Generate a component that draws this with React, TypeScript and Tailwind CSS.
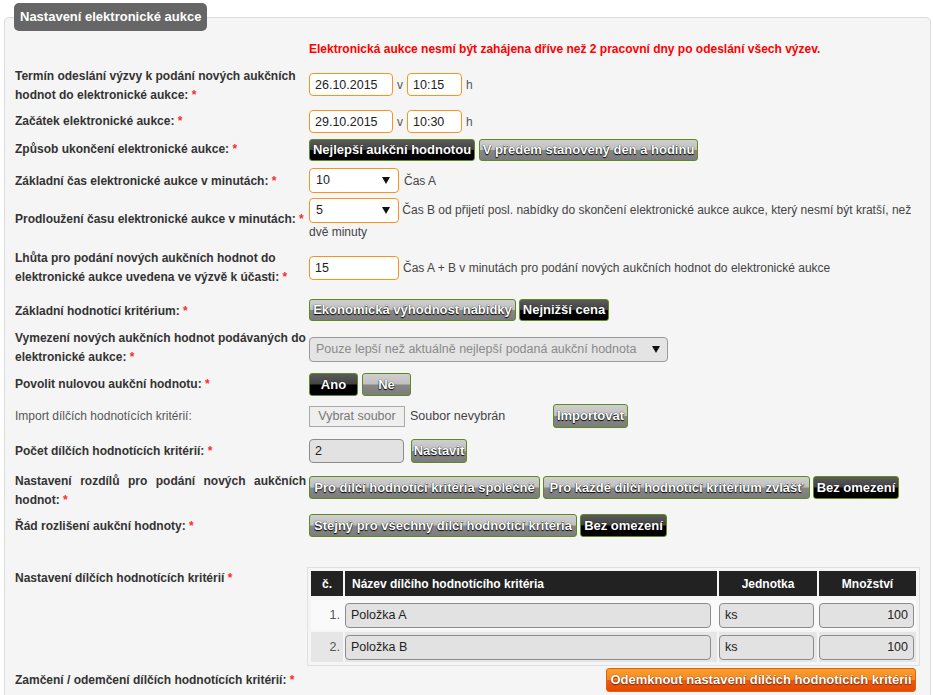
import React from "react";

const star = <span className="font-bold text-[#ff2b2b]"> *</span>;

function Label({ children, className = "" }: { children: React.ReactNode; className?: string }) {
  return (
    <div className={`mr-[3px] w-[291px] shrink-0 text-[12px] leading-[19px] text-[#333] ${className}`}>
      {children}
    </div>
  );
}

function Btn({ children, dark, className = "" }: { children: React.ReactNode; dark?: boolean; className?: string }) {
  return (
    <button
      type="button"
      className={`inline-flex shrink-0 items-center justify-center whitespace-nowrap rounded-[3px] border border-[#5e8a20] text-[13px] font-bold text-white [text-shadow:0_0_1px_#000,0_1px_1px_#000] ${
        dark
          ? "bg-[linear-gradient(#5a5a5a_0%,#444_48%,#000_52%,#000_100%)]"
          : "bg-[linear-gradient(#cfcfcf_0%,#c0c0c0_48%,#878787_52%,#7c7c7c_100%)]"
      } ${className}`}
    >
      {children}
    </button>
  );
}

function OrangeInput({ value, className = "" }: { value: string; className?: string }) {
  return (
    <input
      readOnly
      value={value}
      className={`rounded-[4px] border border-[#f7941d] bg-white px-[5px] text-[12.5px] text-[#222] outline-none ${className}`}
    />
  );
}

function GrayInput({ value, className = "" }: { value: string; className?: string }) {
  return (
    <input
      readOnly
      value={value}
      className={`rounded-[4px] border border-[#8c8c8c] bg-[#e2e2e2] px-[5px] text-[12.5px] text-[#222] outline-none ${className}`}
    />
  );
}

function Arrow() {
  return (
    <svg width="8" height="7" viewBox="0 0 8 7" className="shrink-0">
      <path d="M0 0h8L4 7z" fill="#111" />
    </svg>
  );
}

function Select({ value }: { value: string }) {
  return (
    <span className="inline-flex h-[25px] w-[90px] items-center justify-between rounded-[4px] border border-[#f7941d] bg-white pl-[6px] pr-[8px] align-middle text-[12.5px] text-[#222]">
      {value}
      <Arrow />
    </span>
  );
}

export default function App() {
  return (
    <div className="min-h-screen bg-white font-['Liberation_Sans',Arial,sans-serif] text-[12px] text-[#444]">
      <fieldset className="mx-[4px] mt-[3px] rounded-[5px] border border-[#dcdcdc] bg-[#f5f5f5] pb-[12px] pl-[10px] pr-[10px]">
        <legend className="-ml-px h-[28px] rounded-[5px] bg-[#666] px-[6px] text-[13px] font-bold leading-[28px] text-white">
          Nastavení elektronické aukce
        </legend>

        <div className="h-[35px] pl-[294px] pt-[9px] text-[12px] font-bold leading-[19px] text-[#ff0000]">
          Elektronická aukce nesmí být zahájena dříve než 2 pracovní dny po odeslání všech výzev.
        </div>

        {/* termín odeslání */}
        <div className="flex h-[44px]">
          <Label className="pt-px font-bold">
            Termín odeslání výzvy k podání nových aukčních hodnot do elektronické aukce:{star}
          </Label>
          <div className="flex items-center gap-[4px] self-start pt-[7px]">
            <OrangeInput value="26.10.2015" className="h-[23px] w-[84px]" />
            <span className="text-[#555]">v</span>
            <OrangeInput value="10:15" className="h-[23px] w-[55px]" />
            <span className="text-[#555]">h</span>
          </div>
        </div>

        <div className="flex h-[29px]">
          <Label className="pt-[2px] font-bold">Začátek elektronické aukce:{star}</Label>
          <div className="flex items-center gap-[4px] self-start">
            <OrangeInput value="29.10.2015" className="h-[23px] w-[84px]" />
            <span className="text-[#555]">v</span>
            <OrangeInput value="10:30" className="h-[23px] w-[55px]" />
            <span className="text-[#555]">h</span>
          </div>
        </div>

        <div className="flex h-[29px]">
          <Label className="pt-px font-bold">Způsob ukončení elektronické aukce:{star}</Label>
          <div className="flex items-start gap-[4px]">
            <Btn dark className="h-[22px] w-[166px]">Nejlepší aukční hodnotou</Btn>
            <Btn className="h-[22px] w-[219px]">V předem stanovený den a hodinu</Btn>
          </div>
        </div>

        <div className="flex h-[30px]">
          <Label className="pt-[4px] font-bold">Základní čas elektronické aukce v minutách:{star}</Label>
          <div className="flex items-center gap-[5px] self-start">
            <Select value="10" />
            <span>Čas A</span>
          </div>
        </div>

        <div className="flex h-[50px]">
          <Label className="pt-[12px] font-bold">Prodloužení času elektronické aukce v minutách:{star}</Label>
          <div className="leading-[19px]">
            <Select value="5" /> Čas B od přijetí posl. nabídky do skončení elektronické aukce aukce, který nesmí být kratší, než dvě minuty
          </div>
        </div>

        <div className="flex h-[51px]">
          <Label className="pt-px font-bold">
            Lhůta pro podání nových aukčních hodnot do elektronické aukce uvedena ve výzvě k účasti:{star}
          </Label>
          <div className="flex items-center gap-[4px] self-start pt-[8px]">
            <OrangeInput value="15" className="h-[24px] w-[90px]" />
            <span>Čas A + B v minutách pro podání nových aukčních hodnot do elektronické aukce</span>
          </div>
        </div>

        <div className="flex h-[29px]">
          <Label className="pt-[3px] font-bold">Základní hodnotící kritérium:{star}</Label>
          <div className="flex items-start gap-[3px]">
            <Btn className="h-[22px] w-[207px]">Ekonomická výhodnost nabídky</Btn>
            <Btn dark className="h-[22px] w-[90px]">Nejnižší cena</Btn>
          </div>
        </div>

        <div className="flex h-[45px]">
          <Label className="pt-px font-bold">
            Vymezení nových aukčních hodnot podávaných do elektronické aukce:{star}
          </Label>
          <div className="pt-[9px]">
            <span className="flex h-[25px] w-[359px] items-center justify-between rounded-[4px] border border-[#9a9a9a] bg-[#e4e4e4] pl-[6px] pr-[7px] text-[12.5px] text-[#8a8a8a]">
              Pouze lepší než aktuálně nejlepší podaná aukční hodnota
              <Arrow />
            </span>
          </div>
        </div>

        <div className="flex h-[31px]">
          <Label className="pt-[2px] font-bold">Povolit nulovou aukční hodnotu:{star}</Label>
          <div className="flex items-start gap-[4px]">
            <Btn dark className="h-[23px] w-[49px]">Ano</Btn>
            <Btn className="h-[23px] w-[49px]">Ne</Btn>
          </div>
        </div>

        <div className="flex h-[35px]">
          <Label className="pt-[3px] text-[#555]">Import dílčích hodnotících kritérií:</Label>
          <div className="flex items-center self-start">
            <div className="flex w-[244px] items-center gap-[5px] text-[12.5px]">
              <span className="flex h-[21px] w-[96px] items-center justify-center border border-[#a9a9a9] bg-[#efefef] text-[#777]">
                Vybrat soubor
              </span>
              <span className="text-[#444]">Soubor nevybrán</span>
            </div>
            <Btn className="h-[24px] w-[75px]">Importovat</Btn>
          </div>
        </div>

        <div className="flex h-[32px]">
          <Label className="pt-[3px] font-bold">Počet dílčích hodnotících kritérií:{star}</Label>
          <div className="flex items-start gap-[7px]">
            <GrayInput value="2" className="h-[24px] w-[95px]" />
            <Btn className="h-[24px] w-[56px]">Nastavit</Btn>
          </div>
        </div>

        <div className="flex h-[43px]">
          <Label className="pt-px text-justify font-bold leading-[18px]">
            Nastavení rozdílů pro podání nových aukčních hodnot:{star}
          </Label>
          <div className="flex items-start gap-[3px] pt-[5px]">
            <Btn className="h-[23px] w-[231px]">Pro dílčí hodnotící kritéria společně</Btn>
            <Btn className="h-[23px] w-[267px]">Pro každé dílčí hodnotící kritérium zvlášť</Btn>
            <Btn dark className="h-[23px] w-[86px]">Bez omezení</Btn>
          </div>
        </div>

        <div className="flex h-[53px]">
          <Label className="pt-[3px] font-bold">Řád rozlišení aukční hodnoty:{star}</Label>
          <div className="flex items-start gap-[3px]">
            <Btn className="h-[23px] w-[268px]">Stejný pro všechny dílčí hodnotící kritéria</Btn>
            <Btn dark className="h-[23px] w-[87px]">Bez omezení</Btn>
          </div>
        </div>

        <div className="flex h-[101px]">
          <Label className="pt-[2px] font-bold">Nastavení dílčích hodnotících kritérií{star}</Label>
          <div className="-ml-[2px] self-start border border-[#e0e0e0] p-[3px]">
            <div className="grid grid-cols-[32px_372px_98px_97px] gap-x-[2px]">
              <div className="flex h-[25px] items-center justify-center bg-[#222] font-bold text-white">č.</div>
              <div className="flex h-[25px] items-center bg-[#222] pl-[7px] font-bold text-white">Název dílčího hodnotícího kritéria</div>
              <div className="flex h-[25px] items-center justify-center bg-[#222] font-bold text-white">Jednotka</div>
              <div className="flex h-[25px] items-center justify-center bg-[#222] font-bold text-white">Množství</div>
            </div>
            <div className="mt-[4px] grid grid-cols-[32px_372px_98px_97px] gap-x-[2px] bg-[#fafafa]">
              <div className="flex h-[30px] items-center justify-end pr-[3px] text-[12.5px] text-[#555]">1.</div>
              <div className="flex h-[30px] items-center"><GrayInput value="Položka A" className="h-[25px] w-[366px]" /></div>
              <div className="flex h-[30px] items-center"><GrayInput value="ks" className="h-[25px] w-[95px]" /></div>
              <div className="flex h-[30px] items-center"><GrayInput value="100" className="h-[25px] w-[95px] text-right" /></div>
            </div>
            <div className="mt-[2px] grid grid-cols-[32px_372px_98px_97px] gap-x-[2px]">
              <div className="flex h-[30px] items-center justify-end bg-[#e6e6e6] pr-[3px] text-[12.5px] text-[#555]">2.</div>
              <div className="flex h-[30px] items-center bg-[#e6e6e6]"><GrayInput value="Položka B" className="h-[25px] w-[366px]" /></div>
              <div className="flex h-[30px] items-center bg-[#e6e6e6]"><GrayInput value="ks" className="h-[25px] w-[95px]" /></div>
              <div className="flex h-[30px] items-center bg-[#e6e6e6]"><GrayInput value="100" className="h-[25px] w-[95px] text-right" /></div>
            </div>
          </div>
        </div>

        <div className="flex h-[30px]">
          <Label className="pt-[3px] font-bold">Zamčení / odemčení dílčích hodnotících kritérií:{star}</Label>
          <div className="flex w-[607px] justify-end">
            <button
              type="button"
              className="h-[24px] w-[310px] whitespace-nowrap rounded-[3px] border border-[#e0600c] bg-[linear-gradient(#fb9d2e_0%,#f7891e_48%,#ec5a0c_52%,#e44a04_100%)] text-[13px] font-bold text-white [text-shadow:0_0_1px_#7a2a00,0_1px_1px_#7a2a00]"
            >
              Odemknout nastavení dílčích hodnotících kritérií
            </button>
          </div>
        </div>
      </fieldset>
    </div>
  );
}
